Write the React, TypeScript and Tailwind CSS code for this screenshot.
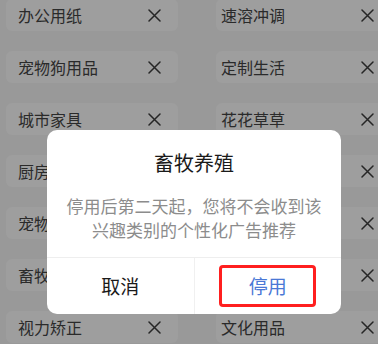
const left = ["办公用纸", "宠物狗用品", "城市家具", "厨房用品", "宠物猫用品", "畜牧养殖", "视力矫正"];
const right = ["速溶冲调", "定制生活", "花花草草", "家居日用", "户外运动", "母婴用品", "文化用品"];

function XIcon() {
  return (
    <svg width="13" height="13" viewBox="0 0 13 13" fill="none">
      <path d="M1 1L12 12M12 1L1 12" stroke="#262626" strokeWidth="1.5" strokeLinecap="round" />
    </svg>
  );
}

function Chip({ label, className }: { label: string; className: string }) {
  return (
    <div className={`flex h-[32px] shrink-0 items-center justify-between rounded-md bg-[#9e9e9e] ${className}`}>
      <span className="text-[16px] leading-none text-[#2a2a2a]">{label}</span>
      <XIcon />
    </div>
  );
}

export default function App() {
  return (
    <div
      className="relative h-[344px] w-[378px] overflow-hidden bg-[#999999]"
      style={{ fontFamily: '"Noto Sans CJK SC", "Noto Sans", sans-serif' }}
    >
      <div className="-mt-px flex flex-col gap-[20px]">
        {left.map((l, i) => (
          <div key={l} className="flex">
            <Chip label={l} className="ml-[6px] w-[172px] pl-[12px] pr-[17px]" />
            <Chip label={right[i]} className="ml-[38px] w-[172px] pl-[5px] pr-[14px]" />
          </div>
        ))}
      </div>

      <div className="absolute left-[47px] top-[130px] flex h-[184px] w-[294px] flex-col rounded-[10px] bg-white">
        <div className="flex flex-col items-center pt-[20px]">
          <div className="text-[20px] leading-[26px] text-[#1a1a1a]">畜牧养殖</div>
          <div className="mt-[18px] text-center text-[17px] leading-[24px] text-[#8c8c8c]">
            <div>停用后第二天起，您将不会收到该</div>
            <div>兴趣类别的个性化广告推荐</div>
          </div>
        </div>
        <div className="mt-auto flex h-[57px] border-t border-[#eeeeee]">
          <div className="flex flex-1 items-center justify-center border-r border-[#f0f0f0] text-[19px] text-[#1a1a1a]">
            取消
          </div>
          <div className="flex flex-1 items-center justify-center">
            <div className="flex h-[42px] w-[97px] items-center justify-center rounded-[4px] border-[3px] border-[#ff1f1f] text-[19px] text-[#4a78d6]">
              停用
            </div>
          </div>
        </div>
      </div>
    </div>
  );
}
